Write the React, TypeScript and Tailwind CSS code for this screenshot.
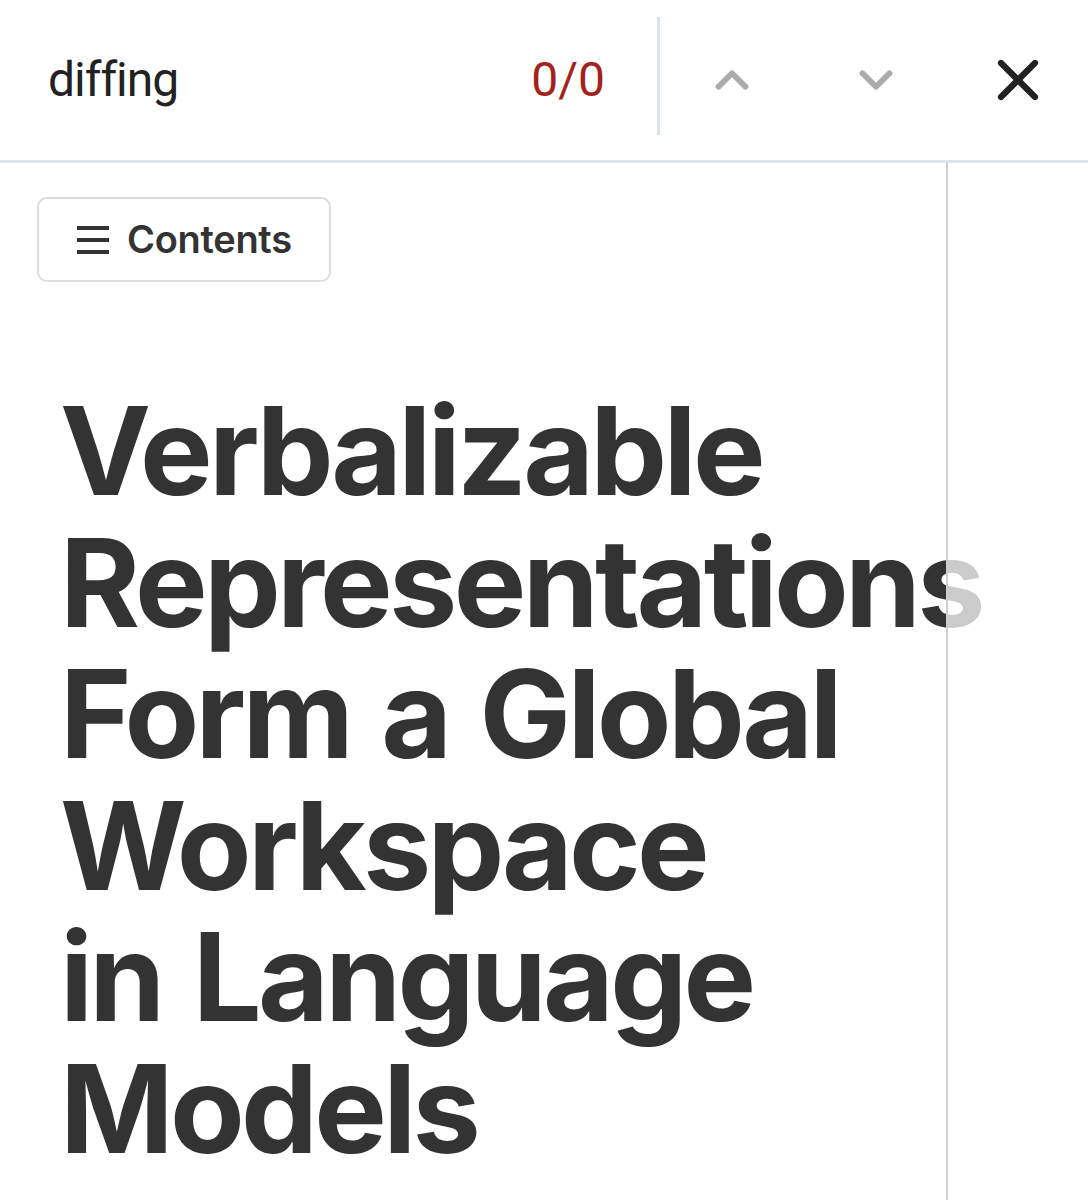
import { ChevronUp, ChevronDown, X } from 'lucide-react';

const FindBar = () => {
  return (
    <div className="flex h-[163px] shrink-0 items-center border-b-[3px] border-[#dfe4ea] bg-white">
      <div className="flex flex-1 items-center pl-[48px] pr-[52px]">
        <span className="flex-1 text-[48px] font-normal tracking-[-1px] text-[#222] [font-family:Roboto,sans-serif]">
          diffing
        </span>
        <span className="text-[48px] text-[#a3221c] [font-family:Roboto,sans-serif]">0/0</span>
      </div>
      <div className="h-[118px] w-[3px] self-start mt-[17px] bg-[#dde3ea]" />
      <div className="flex items-center">
        <button className="flex w-[144px] justify-center text-[#aaa]">
          <ChevronUp size={54} strokeWidth={2.6} />
        </button>
        <button className="flex w-[144px] justify-center text-[#aaa]">
          <ChevronDown size={54} strokeWidth={2.6} />
        </button>
        <button className="flex w-[140px] justify-center text-[#222]">
          <X size={68} strokeWidth={2.2} />
        </button>
      </div>
    </div>
  );
};

const App = () => {
  return (
    <div className="flex h-[1200px] w-full flex-col overflow-hidden bg-white [font-family:Inter,sans-serif]">
      <FindBar />
      <div className="flex flex-1">
        <main className="w-[946px] shrink-0 pt-[34px]">
          <div className="pl-[37px]">
            <button className="flex h-[85px] w-[294px] items-center gap-[18px] rounded-[10px] border-2 border-[#dcdcdc] pl-[38px] text-[#333]">
              <span className="flex w-[32px] flex-col gap-[8px]">
                <span className="h-[4px] bg-[#333]" />
                <span className="h-[4px] bg-[#333]" />
                <span className="h-[4px] bg-[#333]" />
              </span>
              <span className="text-[38px] font-semibold tracking-[-0.3px]">Contents</span>
            </button>
          </div>
          <h1 className="mt-[103px] whitespace-nowrap pl-[60px] text-[122px] font-bold leading-[131.5px] tracking-[-3.7px] [word-spacing:6px] text-[#333]">
            Verbalizable
            <br />
            Representations
            <br />
            Form a Global
            <br />
            Workspace
            <br />
            in Language
            <br />
            Models
          </h1>
        </main>
        <aside className="relative flex-1 border-l-2 border-[#cfcfcf] bg-white/75" />
      </div>
    </div>
  );
};

export default App;
